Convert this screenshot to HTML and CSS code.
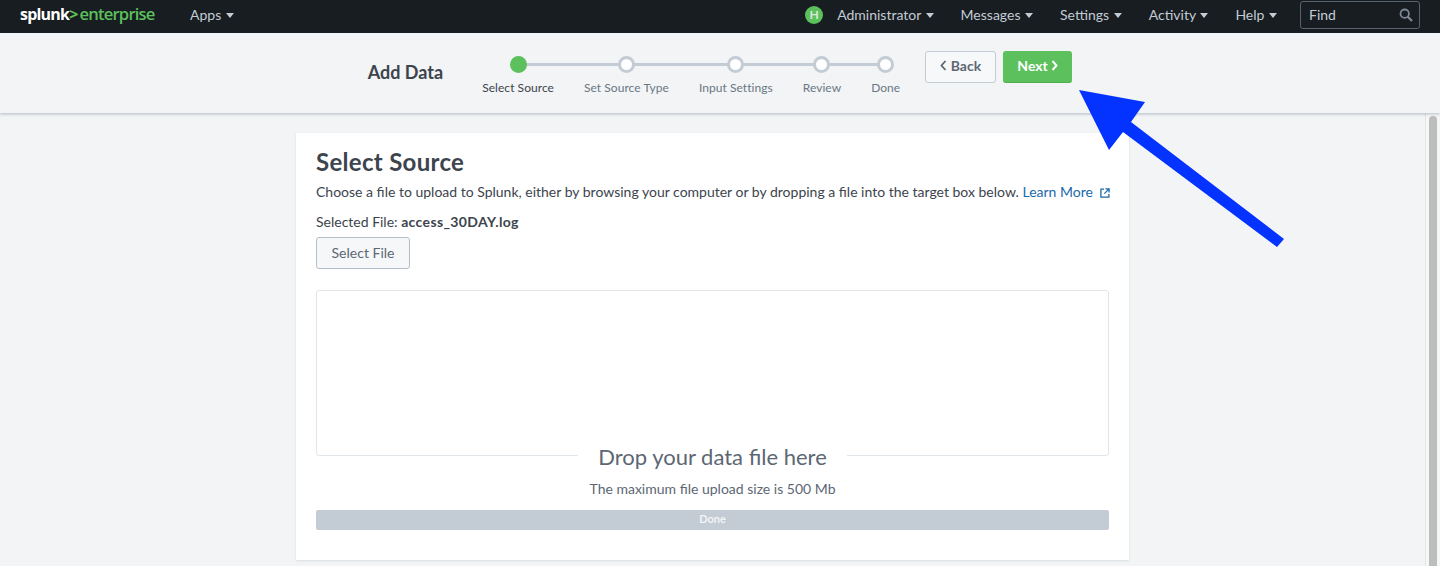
FILE: index.html
```html
<!DOCTYPE html>
<html>
    <head>
        <title>Add Data</title>
        <link rel="stylesheet" href="styles.css">
    </head>
<body>
    <nav class="topbar">
        <div class="logo"><span class="logo-splunk">splunk<span class="logo-mark">&gt;</span></span><span class="logo-product">enterprise</span></div>
        <a class="menu menu-apps">Apps <i class="caret"></i></a>
        <div class="topbar-right">
            <span class="avatar">H</span>
            <a class="menu">Administrator <i class="caret"></i></a>
            <a class="menu">Messages <i class="caret"></i></a>
            <a class="menu">Settings <i class="caret"></i></a>
            <a class="menu">Activity <i class="caret"></i></a>
            <a class="menu">Help <i class="caret"></i></a>
            <div class="find">
                <span class="find-label">Find</span>
                <svg width="14" height="14" viewBox="0 0 14 14"><circle cx="5.7" cy="5.7" r="4.2" fill="none" stroke="#7d8a96" stroke-width="1.8"/><path d="M8.8 8.8L13 13" stroke="#7d8a96" stroke-width="2.2"/></svg>
            </div>
        </div>
    </nav>

    <header class="wizard">
        <h1>Add Data</h1>
        <ol class="steps">
            <li class="step active"><i></i>Select Source</li>
            <li class="step"><i></i>Set Source Type</li>
            <li class="step"><i></i>Input Settings</li>
            <li class="step"><i></i>Review</li>
            <li class="step"><i></i>Done</li>
        </ol>
        <div class="wizard-buttons">
            <button class="btn btn-back"><svg width="7" height="11" viewBox="0 0 7 11"><path d="M5.5 1L1.5 5.5L5.5 10" fill="none" stroke="currentColor" stroke-width="1.8"/></svg> Back</button>
            <button class="btn btn-next">Next <svg width="7" height="11" viewBox="0 0 7 11"><path d="M1.5 1L5.5 5.5L1.5 10" fill="none" stroke="currentColor" stroke-width="2"/></svg></button>
        </div>
    </header>

    <div class="content">
        <main class="page">
            <section class="card">
                <h2>Select Source</h2>
                <p class="intro">Choose a file to upload to Splunk, either by browsing your computer or by dropping a file into the target box below. <a class="learn">Learn More <svg width="10" height="10" viewBox="0 0 11 11"><path d="M4.5 1.2H1V10H9.8V6.5" fill="none" stroke="#1a6aa8" stroke-width="1.4"/><path d="M6 1H10V5M10 1L4.8 6.2" fill="none" stroke="#1a6aa8" stroke-width="1.4"/></svg></a></p>
                <p class="selected">Selected File: <b>access_30DAY.log</b></p>
                <button class="btn btn-file">Select File</button>
                <div class="dropzone"></div>
                <div class="drop-title"><span>Drop your data file here</span></div>
                <p class="limit">The maximum file upload size is 500 Mb</p>
                <div class="progress">Done</div>
            </section>
        </main>
        <div class="scrollbar"><div class="thumb"></div></div>
    </div>

    <svg class="arrow" width="1440" height="566" viewBox="0 0 1440 566"><polygon points="1079,90 1145,102 1131,122 1284,239 1277,247 1123,132 1109,150" fill="#0433ff"/></svg>
</body>
</html>
```

FILE: styles.css
```css
* {
  box-sizing: border-box;
}

html, body {
  height: 100%;
}

body {
  margin: 0;
  height: 566px;
  overflow: hidden;
  display: flex;
  flex-direction: column;
  font-family: Lato, "Open Sans", Arial, sans-serif;
  font-size: 14px;
  color: #3c444d;
  background-color: #f2f4f5;
}

/* top nav */
.topbar {
  flex: 0 0 33px;
  display: flex;
  align-items: center;
  padding: 0 20px 3px;
  background-color: #171d21;
  color: #c3cbd4;
}

.logo {
  font-family: "Open Sans", Arial, sans-serif;
  letter-spacing: -0.8px;
  line-height: 20px;
  width: 170px;
  padding-bottom: 2px;
  white-space: nowrap;
}

.logo-splunk {
  color: #fff;
  font-size: 16px;
  font-weight: 700;
}

.logo-mark {
  color: #5cc05c;
}

.logo-product {
  margin-left: 2px;
  color: #5cc05c;
  font-size: 16.6px;
  font-weight: 600;
}

.menu {
  padding-bottom: 2px;
  font-size: 14px;
  white-space: nowrap;
}

.caret {
  display: inline-block;
  width: 0;
  height: 0;
  margin-left: 1px;
  vertical-align: 2px;
  border-left: 4px solid transparent;
  border-right: 4px solid transparent;
  border-top: 5px solid #c3cbd4;
}

.topbar-right {
  margin-left: auto;
  display: flex;
  align-items: center;
  gap: 27px;
}

.avatar {
  width: 18px;
  height: 18px;
  margin-right: -13px;
  border-radius: 50%;
  background-color: #5cc05c;
  color: #d9e8d9;
  font-size: 12px;
  font-weight: 700;
  line-height: 18px;
  text-align: center;
}

.find {
  width: 120px;
  height: 28px;
  margin-left: -4px;
  display: flex;
  align-items: center;
  justify-content: space-between;
  padding: 0 6px 0 8px;
  border: 1px solid #56626d;
  border-radius: 3px;
}

.find-label {
  padding-bottom: 2px;
}

/* wizard header */
.wizard {
  flex: 0 0 80px;
  display: flex;
  justify-content: center;
  align-items: flex-start;
  position: relative;
  background-color: #f2f4f5;
  box-shadow: 0 1px 3px rgba(60, 80, 100, 0.35);
}

.wizard h1 {
  margin: 28px 39px 0 0;
  font-size: 18px;
  font-weight: 700;
  line-height: 22px;
}

.steps {
  list-style: none;
  position: relative;
  display: flex;
  gap: 30px;
  margin: 23px 25px 0 0;
  padding: 0;
}

.steps::before {
  content: "";
  position: absolute;
  top: 7px;
  left: 36px;
  right: 15px;
  height: 3px;
  background-color: #c3cbd4;
}

.step {
  position: relative;
  display: flex;
  flex-direction: column;
  align-items: center;
  font-size: 12px;
  letter-spacing: 0.05px;
  line-height: 16px;
  color: #6b7785;
  white-space: nowrap;
}

.step i {
  width: 17px;
  height: 17px;
  margin-bottom: 7px;
  border: 3px solid #c3cbd4;
  border-radius: 50%;
  background-color: #fff;
}

.step.active {
  color: #3c444d;
}

.step.active i {
  border-color: #5cc05c;
  background-color: #5cc05c;
}

.wizard-buttons {
  display: flex;
  gap: 7px;
  margin-top: 18px;
}

.btn {
  height: 32px;
  padding: 0 0 2px;
  border-radius: 3px;
  font-family: inherit;
  font-size: 14px;
}

.btn-back {
  width: 71px;
  padding-bottom: 4px;
  border: 1px solid #c3cbd4;
  background-color: #f7f8fa;
  color: #5c6773;
  font-weight: 700;
}

.btn-next {
  width: 69px;
  border: 0;
  border-bottom: 1px solid #4fae4f;
  background-color: #5cc05c;
  color: #fff;
  font-weight: 700;
}

/* page body */
.content {
  flex: 1;
  display: flex;
  min-height: 0;
}

.page {
  flex: 1;
  padding: 20px 0 0 0;
  display: flex;
  justify-content: center;
}

.card {
  width: 833px;
  height: 427px;
  padding: 16px 20px 0;
  background-color: #fff;
  box-shadow: 0 1px 2px rgba(60, 80, 100, 0.12);
}

.card h2 {
  margin: 0 0 8px;
  font-size: 24px;
  font-weight: 700;
  letter-spacing: 0.3px;
  line-height: 26px;
}

.intro {
  margin: 0 0 12px;
  font-size: 14px;
  line-height: 18px;
  white-space: nowrap;
}

.learn {
  color: #1a6aa8;
}

.learn svg {
  margin-left: 3px;
  vertical-align: -1px;
}

.selected {
  margin: 0 0 6px;
  line-height: 18px;
}

.selected b {
  letter-spacing: 0.35px;
}

.btn-file {
  display: block;
  width: 94px;
  border: 1px solid #b5bec8;
  background-color: #f5f7f9;
  color: #5c6773;
}

.dropzone {
  height: 166px;
  margin-top: 21px;
  border: 1px solid #e1e6eb;
  border-radius: 3px;
}

.drop-title {
  margin-top: -13px;
  text-align: center;
  font-size: 22px;
  line-height: 28px;
  color: #5c6773;
}

.drop-title span {
  display: inline-block;
  padding: 0 20px;
  background-color: #fff;
}

.limit {
  margin: 9px 0 12px;
  line-height: 18px;
  text-align: center;
  color: #5c6773;
}

.progress {
  height: 20px;
  border-radius: 2px;
  background-color: #c3cbd4;
  color: #f2f4f5;
  font-size: 11px;
  font-weight: 700;
  line-height: 18px;
  text-align: center;
}

.scrollbar {
  flex: 0 0 15px;
  padding: 3px 3px 0;
  border-left: 1px solid #e3e5e7;
  background-color: #f5f6f7;
}

.thumb {
  height: 100%;
  border-radius: 4px 4px 0 0;
  background-color: #bdbdbd;
}

/* annotation over the screenshot */
.arrow {
  position: absolute;
  top: 0;
  left: 0;
  pointer-events: none;
}
```
